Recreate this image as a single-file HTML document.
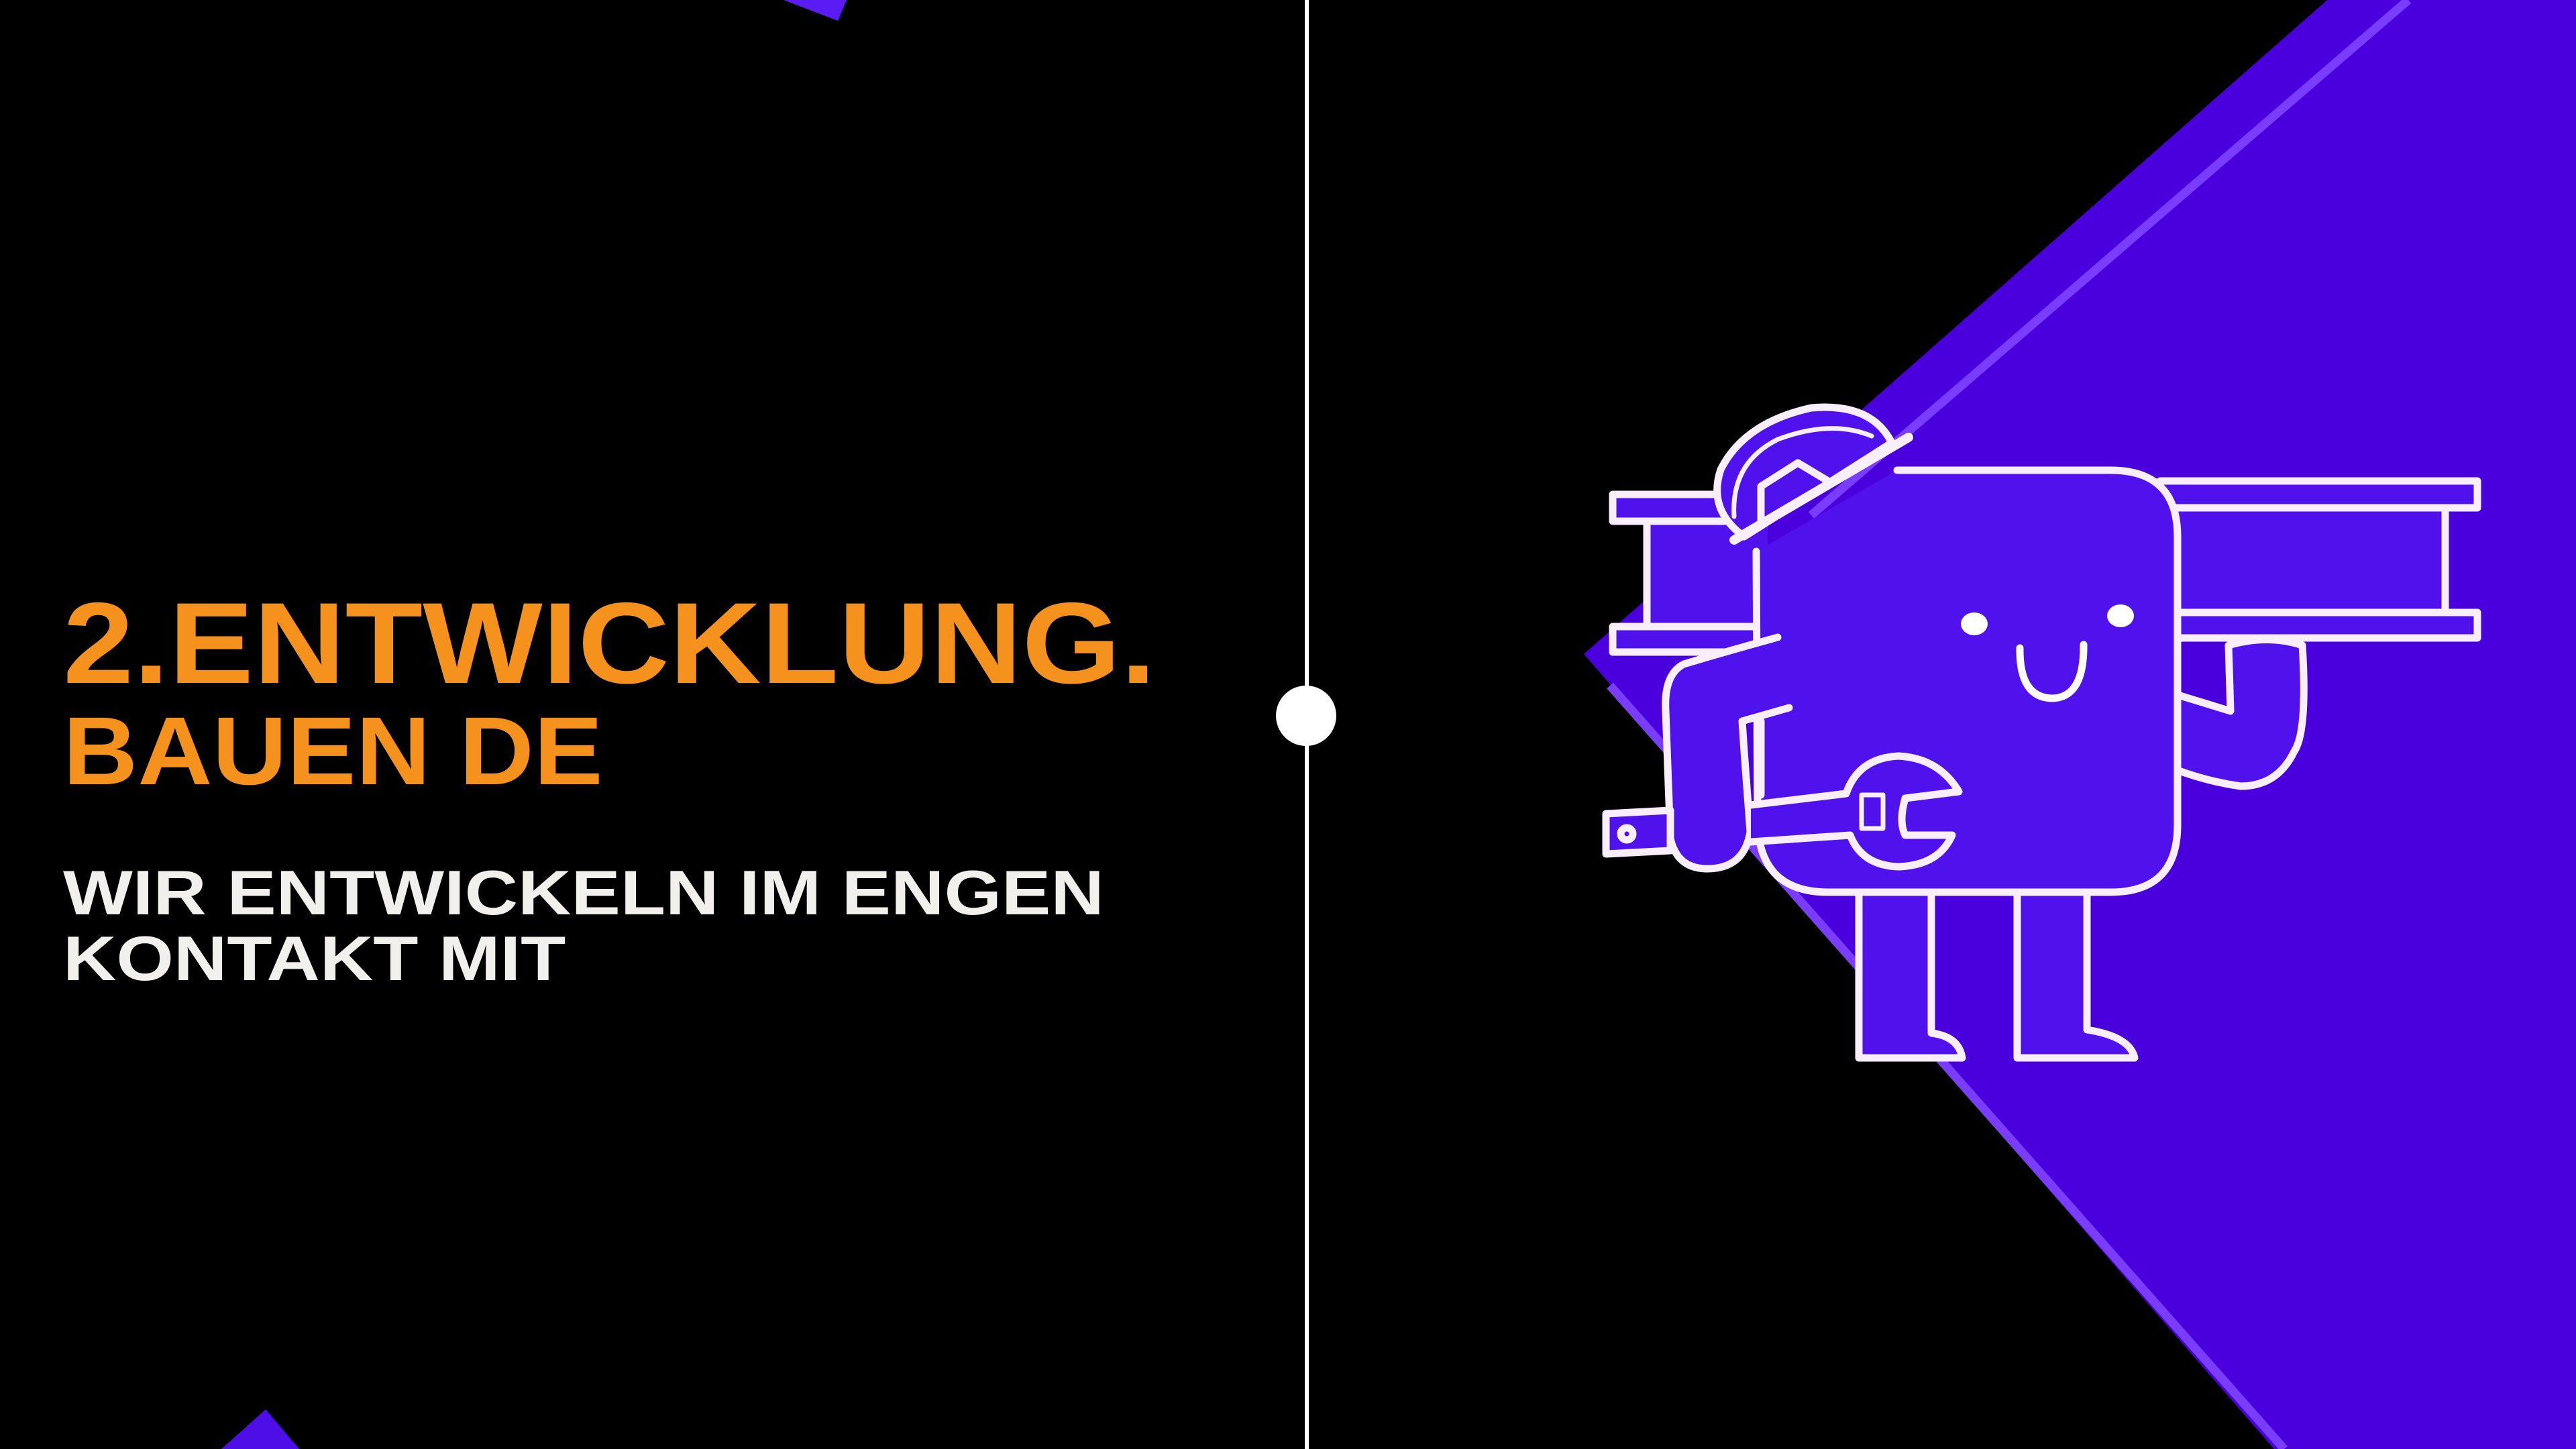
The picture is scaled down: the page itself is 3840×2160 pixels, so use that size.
<!DOCTYPE html>
<html><head><meta charset="utf-8"><style>
html,body{margin:0;padding:0;background:#000;}
body{width:3840px;height:2160px;overflow:hidden;position:relative;}
svg{position:absolute;left:0;top:0;}
</style></head><body>
<svg width="3840" height="2160" viewBox="0 0 3840 2160">
<rect width="3840" height="2160" fill="#000"/>
<polygon points="1168,0 1262,0 1249,31" fill="#5a1cf2"/>
<polygon points="396,2101 330,2160 446,2160" fill="#4d0fe6"/>
<polygon points="3469,0 3840,0 3840,2160 3390,2160 2361,975" fill="#4a00dc"/>
<line x1="3590" y1="0" x2="2700" y2="768" stroke="#7a3dff" stroke-width="13"/>
<line x1="2400" y1="1022" x2="3405" y2="2160" stroke="#7a3dff" stroke-width="13"/>
<rect x="1945" y="0" width="6" height="2160" fill="#fff"/>
<circle cx="1947" cy="1067" r="45" fill="#fff"/>
<g font-family="Liberation Sans, Arial, sans-serif" font-weight="bold">
<text transform="translate(94,1018) scale(1.1,1)" font-size="172" fill="#f5921e">2.ENTWICKLUNG.</text>
<text transform="translate(94,1169) scale(1.07,1)" font-size="144" fill="#f5921e">BAUEN DE</text>
<text transform="translate(94,1363) scale(1.17,1)" font-size="94" fill="#f2f0ec">WIR ENTWICKELN IM ENGEN</text>
<text transform="translate(94,1461) scale(1.17,1)" font-size="94" fill="#f2f0ec">KONTAKT MIT</text>
</g>
<g stroke="#f8eefc" stroke-width="11" stroke-linejoin="round" stroke-linecap="round" fill="#5012ec">
<rect x="2455" y="760" width="180" height="180" stroke="none"/>
<rect x="2404" y="737" width="170" height="40"/>
<line x1="2455" y1="778" x2="2455" y2="934"/>
<rect x="2404" y="934" width="240" height="38"/>
<rect x="3230" y="757" width="415" height="156"/>
<rect x="3220" y="717" width="473" height="40"/>
<rect x="3220" y="913" width="473" height="38"/>
<path d="M2771,1320 L2771,1577 L2925,1577 Q2920,1545 2879,1540 L2879,1320"/>
<path d="M3007,1320 L3007,1577 L3182,1577 Q3175,1545 3111,1535 L3111,1320"/>
<path d="M3240,1034 L3325,1060 L3322,962 Q3380,945 3432,962 Q3440,1090 3420,1120 Q3395,1172 3340,1172 Q3290,1165 3240,1146 Z"/>
<path d="M2618,822 L2620,1230 Q2625,1330 2725,1330 L3146,1330 Q3246,1330 3246,1230 L3246,800 Q3246,701 3146,701 L2828,701 L2618,822 Z" stroke="none"/>
<path d="M2618,822 L2620,1230 Q2625,1330 2725,1330 L3146,1330 Q3246,1330 3246,1230 L3246,800 Q3246,701 3146,701 L2828,701"/>
<path d="M2600,800 Q2545,760 2565,700 Q2600,630 2700,608 Q2790,600 2820,660 L2600,800 Z"/>
<path d="M2585,770 Q2580,690 2650,655 Q2730,625 2790,650" fill="none" stroke-width="7"/>
<path d="M2625,775 L2625,725 L2680,690 L2730,720" fill="none"/>
<path d="M2585,805 L2845,652" fill="none" stroke-width="14"/>
<path d="M2650,950 Q2560,975 2510,990 Q2480,1005 2483,1060 L2490,1250 Q2500,1295 2545,1295 Q2600,1295 2609,1240 L2600,1120 L2597,1075 L2667,1055"/>
<line x1="2625" y1="1075" x2="2625" y2="1185"/>
<path d="M2394,1213 L2490,1208 L2490,1268 L2394,1273 Z"/>
<circle cx="2425" cy="1243" r="9" fill="none"/>
<path d="M2610,1200 L2752,1183 Q2770,1130 2830,1127 Q2890,1130 2920,1180 L2840,1190 Q2830,1225 2840,1245 L2910,1245 Q2890,1290 2830,1292 Q2775,1290 2758,1245 L2610,1255"/>
<rect x="2775" y="1185" width="32" height="50" fill="none" stroke-width="7"/>
</g>
<ellipse cx="2943" cy="930" rx="20" ry="17" fill="#fff"/>
<ellipse cx="3161" cy="918" rx="20" ry="17" fill="#fff"/>
<path d="M3011,966 Q3010,1040 3059,1041 Q3107,1040 3106,961" fill="none" stroke="#fff" stroke-width="11" stroke-linecap="round"/>
</svg>
</body></html>
